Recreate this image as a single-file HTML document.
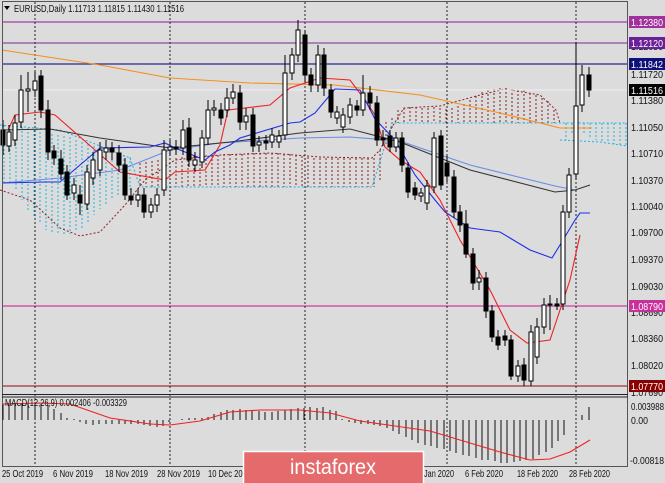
<!DOCTYPE html>
<html><head><meta charset="utf-8"><style>
html,body{margin:0;padding:0;background:#dcdcdc;width:665px;height:483px;overflow:hidden}
svg{display:block;font-family:"Liberation Sans",sans-serif}
</style></head><body>
<svg width="665" height="483" viewBox="0 0 665 483" xmlns="http://www.w3.org/2000/svg">
<rect width="665" height="483" fill="#dcdcdc"/>
<g stroke-dasharray="2,2" stroke-width="1">
<path d="M4 125V183M10 125V183M16 127V190M22 127V200M28 128V210M34 130V218M40 132V224M46 133V230M52 134V233M58 135V234M64 136V235M70 137V234M76 140V232M82 142V228M88 144V222M94 146V215M100 148V209M106 150V204M112 152V200M118 153V196M124 155V193M130 157V190" stroke="#19b6e6"/>
<path d="M140 163V187M146 162V187M152 161V187M158 160V187M164 159V187M170 158V187M176 158V187M182 157V187M188 156V187M194 156V187M200 156V187M206 155V187M212 155V187M218 155V187M224 154V187M230 154V187M236 154V187M242 154V187M248 153V187M254 153V187M260 153V187M266 153V187M272 153V187M278 153V187M284 154V187M290 154V187M296 155V187M302 156V187M308 157V187M314 158V187M320 158V187M326 158V187M332 158V187M338 158V187M344 158V187M350 158V187M356 158V187M362 158V187M368 158V187M374 158V187M380 150V180" stroke="#8b2020"/>
<path d="M386 122V145M392 118V130M398 110V123M404 108V123M410 107V123M416 107V123M422 108V123M428 108V123M434 107V123M440 108V123M446 109V123M452 108V123M458 106V123M464 104V123M470 100V123M476 96V123M482 92V123M488 90V123M494 89V123M500 88V123M506 88V123M512 89V123M518 90V123M524 90V123M530 93V123M536 95V123M542 98V123M548 101V123M554 110V123" stroke="#8b2020"/>
<path d="M566 123V140M572 123V135M578 123V133M584 123V135M590 123V137M596 123V140M602 123V142M608 123V143M614 123V144M620 123V145M626 123V146" stroke="#19b6e6"/>
</g>
<g fill="none" stroke-dasharray="2,2">
<path d="M0 190L30 200L60 228L80 236L100 232L125 205L145 180L175 160L220 155L270 153L320 157L372 158L380 150L392 127L404 108L440 106L480 95L505 89L540 95L556 110L560 123" stroke="#8b2020"/>
<path d="M0 125L60 130L130 158L140 187L372 187L392 123L627 123M560 140L600 142L627 146" stroke="#19b6e6"/>
</g>
<line x1="2" y1="22" x2="628" y2="22" stroke="#a040a8" stroke-width="1.3"/>
<line x1="2" y1="43" x2="628" y2="43" stroke="#8a50a0" stroke-width="1.3"/>
<line x1="2" y1="64" x2="628" y2="64" stroke="#2a2a90" stroke-width="1.3"/>
<line x1="2" y1="90" x2="628" y2="90" stroke="#f0f0f8" stroke-width="1"/>
<line x1="2" y1="306" x2="628" y2="306" stroke="#d03c9c" stroke-width="1.2"/>
<line x1="2" y1="386" x2="628" y2="386" stroke="#a03434" stroke-width="1.2"/>
<path d="M35 2V467M170 2V467M305 2V467M447 2V467M576 2V467" stroke="#222" stroke-dasharray="2,2"/>
<g fill="none" stroke-width="1.1">
<path d="M2 50L100 65L170 78L250 83L335 85L420 95L500 113L560 128L592 128" stroke="#f39020"/>
<path d="M2 183L60 178L120 170L170 150L220 143L300 138L350 137L400 141L470 165L555 186L575 190" stroke="#6a8ae8"/>
<path d="M2 130L50 129L100 138L170 148L230 142L300 133L350 129L400 142L470 170L555 192L575 190L590 185" stroke="#333"/>
<path d="M8 130L15 115L40 112L55 115L95 150L120 172L165 180L175 172L205 170L220 145L228 110L270 105L290 88L320 78L350 80L365 100L375 115L385 147L400 160L420 172L440 200L460 240L490 290L510 330L527 343L550 340L560 310L570 280L580 235" stroke="#f02020"/>
<path d="M2 183L45 182L60 182L100 148L150 147L165 143L175 148L205 160L215 152L230 145L240 138L290 123L300 122L315 113L335 89L360 90L375 119L395 140L415 175L435 200L445 212L470 228L500 232L530 250L552 258L560 245L575 220L580 213L590 213" stroke="#1e2ee8"/>
</g>
<g stroke="#000" stroke-width="1">
<path d="M3 120V155M9 125V152M15 115V146M21 75V128M28 72V112M35 72V97M41 70V118M48 100V160M54 145V165M61 150V180M67 165V200M74 178V200M80 185V215M87 165V210M93 152V185M100 142V176M106 140V160M112 142V160M119 145V172M125 158V200M131 188V205M138 188V207M144 188V218M151 198V218M157 188V212M164 140V196M170 140V156M176 140V155M183 120V155M189 118V167M195 152V172M202 130V168M208 100V145M214 100V116M221 103V125M227 88V117M233 84V104M240 85V130M246 108V130M253 108V152M259 136V152M266 135V150M272 128V148M279 130V148M285 55V140M292 48V80M298 20V62M305 30V82M311 68V92M318 45V92M324 48V96M331 84V118M337 106V124M343 108V133M350 98V124M357 100V116M363 75V116M370 86V110M377 96V146M383 130V146M390 130V152M396 132V152M402 132V172M408 162V198M415 182V200M421 188V202M427 180V210M434 132V193M441 130V190M447 156V182M454 170V218M460 205V232M466 210V258M473 248V290M479 270V290M486 272V318M492 305V342M498 330V350M505 330V346M511 335V380M518 360V382M524 358V386M531 325V386M537 318V364M544 298V334M550 295V330M557 298V310M563 205V310M569 168V218M576 42V180M582 65V112M589 67V97"/>
<g fill="#000">
<rect x="1" y="130" width="4" height="15"/><rect x="39" y="76" width="4" height="34"/><rect x="46" y="110" width="4" height="42"/><rect x="52" y="151" width="4" height="7"/><rect x="59" y="159" width="4" height="15"/><rect x="65" y="172" width="4" height="23"/><rect x="78" y="195" width="4" height="8"/><rect x="110" y="148" width="4" height="4"/><rect x="117" y="153" width="4" height="12"/><rect x="123" y="165" width="4" height="30"/><rect x="129" y="196" width="4" height="4"/><rect x="142" y="195" width="4" height="17"/><rect x="174" y="147" width="4" height="2"/><rect x="187" y="128" width="4" height="32"/><rect x="219" y="110" width="4" height="8"/><rect x="238" y="93" width="4" height="29"/><rect x="251" y="115" width="4" height="31"/><rect x="264" y="141" width="4" height="2"/><rect x="303" y="35" width="4" height="40"/><rect x="309" y="75" width="4" height="10"/><rect x="322" y="55" width="4" height="33"/><rect x="329" y="90" width="4" height="22"/><rect x="355" y="106" width="4" height="4"/><rect x="368" y="93" width="4" height="10"/><rect x="375" y="103" width="4" height="37"/><rect x="381" y="138" width="4" height="2"/><rect x="388" y="136" width="4" height="11"/><rect x="400" y="138" width="4" height="27"/><rect x="406" y="168" width="4" height="24"/><rect x="413" y="188" width="4" height="7"/><rect x="439" y="136" width="4" height="49"/><rect x="445" y="163" width="4" height="13"/><rect x="452" y="177" width="4" height="35"/><rect x="458" y="212" width="4" height="13"/><rect x="464" y="224" width="4" height="30"/><rect x="471" y="254" width="4" height="29"/><rect x="484" y="278" width="4" height="33"/><rect x="490" y="311" width="4" height="26"/><rect x="496" y="337" width="4" height="8"/><rect x="503" y="336" width="4" height="4"/><rect x="509" y="340" width="4" height="36"/><rect x="522" y="365" width="4" height="15"/><rect x="555" y="304" width="4" height="2"/><rect x="587" y="75" width="4" height="15"/>
</g>
<g fill="#fff">
<rect x="7" y="132" width="4" height="14"/><rect x="13" y="123" width="4" height="17"/><rect x="19" y="90" width="4" height="32"/><rect x="26" y="89" width="4" height="2"/><rect x="33" y="81" width="4" height="9"/><rect x="72" y="185" width="4" height="8"/><rect x="85" y="172" width="4" height="32"/><rect x="91" y="160" width="4" height="18"/><rect x="98" y="150" width="4" height="20"/><rect x="104" y="148" width="4" height="4"/><rect x="136" y="195" width="4" height="5"/><rect x="149" y="205" width="4" height="7"/><rect x="155" y="195" width="4" height="10"/><rect x="162" y="150" width="4" height="40"/><rect x="168" y="147" width="4" height="3"/><rect x="181" y="130" width="4" height="18"/><rect x="193" y="160" width="4" height="5"/><rect x="200" y="138" width="4" height="24"/><rect x="206" y="110" width="4" height="28"/><rect x="212" y="108" width="4" height="2"/><rect x="225" y="98" width="4" height="12"/><rect x="231" y="92" width="4" height="6"/><rect x="244" y="116" width="4" height="6"/><rect x="257" y="142" width="4" height="3"/><rect x="270" y="135" width="4" height="7"/><rect x="277" y="136" width="4" height="6"/><rect x="283" y="73" width="4" height="62"/><rect x="290" y="55" width="4" height="18"/><rect x="296" y="30" width="4" height="25"/><rect x="316" y="55" width="4" height="30"/><rect x="335" y="112" width="4" height="6"/><rect x="341" y="115" width="4" height="12"/><rect x="348" y="105" width="4" height="12"/><rect x="361" y="93" width="4" height="17"/><rect x="394" y="138" width="4" height="9"/><rect x="419" y="193" width="4" height="3"/><rect x="425" y="186" width="4" height="17"/><rect x="432" y="138" width="4" height="49"/><rect x="477" y="278" width="4" height="4"/><rect x="516" y="366" width="4" height="10"/><rect x="529" y="332" width="4" height="49"/><rect x="535" y="327" width="4" height="30"/><rect x="542" y="305" width="4" height="22"/><rect x="548" y="304" width="4" height="1"/><rect x="561" y="212" width="4" height="92"/><rect x="567" y="175" width="4" height="37"/><rect x="574" y="106" width="4" height="68"/><rect x="580" y="75" width="4" height="30"/>
</g>
</g>
<g stroke="#555" fill="none">
<rect x="2.5" y="1.5" width="625" height="465"/>
<line x1="2" y1="394.5" x2="628" y2="394.5" stroke="#222"/>
<line x1="2" y1="397" x2="628" y2="397" stroke="#222"/>
</g>
<path stroke="#111" stroke-width="1" d="M3 420V404M9 420V404M15 420V404M22 420V404M28 420V404M35 420V404M41 420V404M48 420V405M54 420V409M61 420V413M67 420V418M74 420V419M80 420V422M86 420V424M93 420V425M99 420V424M106 420V424M112 420V424M119 420V424M125 420V424M131 420V424M138 420V424M144 420V425M150 420V426M157 420V427M163 420V426M169 420V422M176 420V420M182 420V419M189 420V418M195 420V418M202 420V418M208 420V417M214 420V414M221 420V412M227 420V410M233 420V410M240 420V409M246 420V410M252 420V411M259 420V411M265 420V412M272 420V412M278 420V411M285 420V410M291 420V409M298 420V408M304 420V408M310 420V407M317 420V408M323 420V407M330 420V410M336 420V411M342 420V419M349 420V422M355 420V423M361 420V424M368 420V424M374 420V425M380 420V426M387 420V428M393 420V431M399 420V434M406 420V437M412 420V440M418 420V443M425 420V445M431 420V446M437 420V448M444 420V449M450 420V451M456 420V453M463 420V455M469 420V456M476 420V458M482 420V460M488 420V460M495 420V461M501 420V463M507 420V463M514 420V462M520 420V461M526 420V460M533 420V459M539 420V455M546 420V452M552 420V448M558 420V441M564 420V435M582 420V415M589 420V407"/>
<path fill="none" stroke="#f02020" stroke-width="1.1" d="M2 404L40 403L70 404L110 418L150 424L170 425L200 421L230 412L260 410L300 410L330 413L360 421L430 431L470 443L500 452L530 460L550 459L570 452L590 440"/>
<text x="5" y="406" font-size="10" fill="#111" textLength="122" lengthAdjust="spacingAndGlyphs">MACD(12,26,9) 0.002406 -0.003329</text>
<g font-size="10" fill="#111" lengthAdjust="spacingAndGlyphs">
<text x="631" y="50" textLength="32" lengthAdjust="spacingAndGlyphs">1.12050</text><text x="631" y="78" textLength="32" lengthAdjust="spacingAndGlyphs">1.11720</text><text x="631" y="104" textLength="32" lengthAdjust="spacingAndGlyphs">1.11380</text><text x="631" y="131" textLength="32" lengthAdjust="spacingAndGlyphs">1.11050</text><text x="631" y="157" textLength="32" lengthAdjust="spacingAndGlyphs">1.10710</text><text x="631" y="184" textLength="32" lengthAdjust="spacingAndGlyphs">1.10370</text><text x="631" y="210" textLength="32" lengthAdjust="spacingAndGlyphs">1.10040</text><text x="631" y="236" textLength="32" lengthAdjust="spacingAndGlyphs">1.09700</text><text x="631" y="263" textLength="32" lengthAdjust="spacingAndGlyphs">1.09370</text><text x="631" y="290" textLength="32" lengthAdjust="spacingAndGlyphs">1.09030</text><text x="631" y="316" textLength="32" lengthAdjust="spacingAndGlyphs">1.08690</text><text x="631" y="342" textLength="32" lengthAdjust="spacingAndGlyphs">1.08360</text><text x="631" y="369" textLength="32" lengthAdjust="spacingAndGlyphs">1.08020</text><text x="631" y="396" textLength="32" lengthAdjust="spacingAndGlyphs">1.07690</text>
<text x="631" y="410" textLength="33" lengthAdjust="spacingAndGlyphs">0.003988</text><text x="631" y="424" textLength="17" lengthAdjust="spacingAndGlyphs">0.00</text><text x="630" y="464" textLength="34" lengthAdjust="spacingAndGlyphs">-0.00818</text>
</g>
<g font-size="10" fill="#fff">
<rect x="629" y="16" width="36" height="12" fill="#a0309c"/><text x="631" y="26" textLength="32" lengthAdjust="spacingAndGlyphs">1.12380</text>
<rect x="629" y="37" width="36" height="12" fill="#6a2098"/><text x="631" y="47" textLength="32" lengthAdjust="spacingAndGlyphs">1.12120</text>
<rect x="629" y="58" width="36" height="12" fill="#10107a"/><text x="631" y="68" textLength="32" lengthAdjust="spacingAndGlyphs">1.11842</text>
<rect x="629" y="84" width="36" height="12" fill="#000"/><text x="631" y="94" textLength="32" lengthAdjust="spacingAndGlyphs">1.11516</text>
<rect x="629" y="300" width="36" height="12" fill="#c8309a"/><text x="631" y="310" textLength="32" lengthAdjust="spacingAndGlyphs">1.08790</text>
<rect x="629" y="380" width="36" height="12" fill="#8a0000"/><text x="631" y="390" textLength="32" lengthAdjust="spacingAndGlyphs">1.07770</text>
</g>
<g font-size="10" fill="#111">
<text x="2" y="477" textLength="41" lengthAdjust="spacingAndGlyphs">25 Oct 2019</text><text x="53" y="477" textLength="40" lengthAdjust="spacingAndGlyphs">6 Nov 2019</text><text x="105" y="477" textLength="43" lengthAdjust="spacingAndGlyphs">18 Nov 2019</text><text x="157" y="477" textLength="43" lengthAdjust="spacingAndGlyphs">28 Nov 2019</text><text x="208" y="477" textLength="43" lengthAdjust="spacingAndGlyphs">10 Dec 2019</text><text x="424" y="477" textLength="30" lengthAdjust="spacingAndGlyphs">Jan 2020</text><text x="465" y="477" textLength="38" lengthAdjust="spacingAndGlyphs">6 Feb 2020</text><text x="517" y="477" textLength="41" lengthAdjust="spacingAndGlyphs">18 Feb 2020</text><text x="569" y="477" textLength="41" lengthAdjust="spacingAndGlyphs">28 Feb 2020</text>
</g>
<path d="M4 6L10 6L7 10Z" fill="#000"/>
<text x="14" y="12" font-size="10" fill="#111" textLength="170" lengthAdjust="spacingAndGlyphs">EURUSD,Daily  1.11713 1.11815 1.11430 1.11516</text>
<rect x="243.5" y="451.5" width="180" height="33" fill="#e46a6c" stroke="#fff" stroke-width="1.5"/>
<text x="333" y="474" font-size="21" fill="#fff" text-anchor="middle" textLength="86" lengthAdjust="spacingAndGlyphs">instaforex</text>
</svg>
</body></html>
